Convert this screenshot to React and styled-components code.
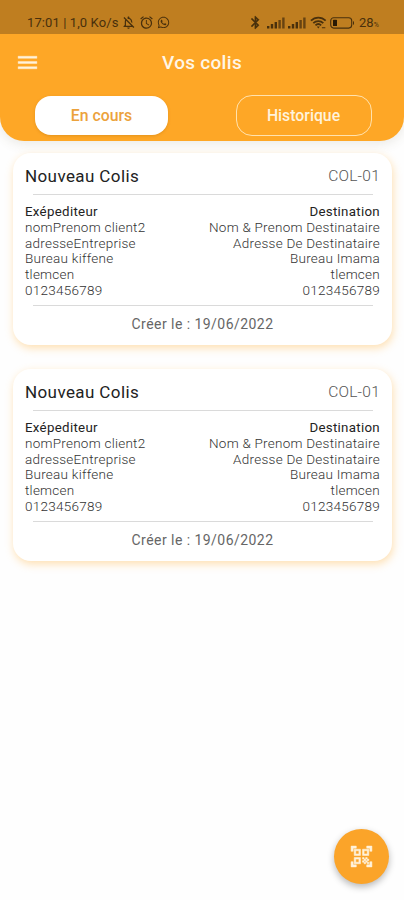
import React from 'react';
import styled, { createGlobalStyle } from 'styled-components';
import {
  MdAlarm,
  MdBluetooth,
  MdMenu,
  MdOutlineNotificationsOff,
  MdQrCodeScanner,
} from 'react-icons/md';
import { FaWhatsapp } from 'react-icons/fa';

const parcels = [
  {
    id: 1,
    title: 'Nouveau Colis',
    code: 'COL-01',
    from: ['nomPrenom client2', 'adresseEntreprise', 'Bureau kiffene', 'tlemcen', '0123456789'],
    to: ['Nom & Prenom Destinataire', 'Adresse De Destinataire', 'Bureau Imama', 'tlemcen', '0123456789'],
    date: '19/06/2022',
  },
  {
    id: 2,
    title: 'Nouveau Colis',
    code: 'COL-01',
    from: ['nomPrenom client2', 'adresseEntreprise', 'Bureau kiffene', 'tlemcen', '0123456789'],
    to: ['Nom & Prenom Destinataire', 'Adresse De Destinataire', 'Bureau Imama', 'tlemcen', '0123456789'],
    date: '19/06/2022',
  },
];

const Signal = () => (
  <svg width="18" height="12" viewBox="0 0 18 12" fill="currentColor">
    <rect x="0" y="9" width="2.4" height="2.5" />
    <rect x="3.8" y="7" width="2.4" height="4.5" />
    <rect x="7.6" y="5" width="2.4" height="6.5" />
    <rect x="11.4" y="3" width="2.4" height="8.5" opacity="0.75" />
    <rect x="15.2" y="0.5" width="2.4" height="11" opacity="0.75" />
  </svg>
);

const Wifi = () => (
  <svg width="17" height="14" viewBox="0 0 18 14" fill="none" stroke="currentColor" strokeWidth="1.9">
    <path d="M1 4.6C5.4.2 12.2.2 16.6 4.6" />
    <path d="M3.5 7.2c3-3 7.6-3 10.6 0" />
    <path d="M5.8 9.5c1.8-1.7 4.2-1.7 6 0" />
    <path d="M7.2 10.8h3.2l-1.6 2z" fill="currentColor" stroke="none" />
    <path d="M12.6 12h3.6" strokeWidth="1.2" />
  </svg>
);

const Battery = () => (
  <svg width="25" height="12" viewBox="0 0 25 12" fill="none">
    <rect x="0.7" y="0.7" width="21" height="10.4" rx="3" stroke="currentColor" strokeWidth="1.1" />
    <rect x="3" y="2.8" width="4" height="6.2" rx="0.6" fill="#2a1a04" />
    <path d="M23 4c1.4.4 1.4 3.6 0 4z" fill="currentColor" />
  </svg>
);

const App = () => {
  return (
    <Screen>
      <GlobalStyle />
      <Header>
        <StatusBar>
          <StatusGroup $gap="3px">
            <StatusText>17:01 | 1,0 Ko/s</StatusText>
            <MdOutlineNotificationsOff size={15} />
            <MdAlarm size={15} />
            <FaWhatsapp size={13} />
          </StatusGroup>
          <StatusGroup $gap="3.5px">
            <BluetoothIcon size={15} />
            <Signal />
            <Signal />
            <Wifi />
            <Battery />
            <StatusText>
              28<small>%</small>
            </StatusText>
          </StatusGroup>
        </StatusBar>
        <Toolbar>
          <MenuButton aria-label="Menu">
            <MdMenu size={25} />
          </MenuButton>
          <Title>Vos colis</Title>
        </Toolbar>
        <Tabs>
          <Tab $active>En cours</Tab>
          <Tab>Historique</Tab>
        </Tabs>
      </Header>

      <List>
        {parcels.map((parcel) => (
          <Card key={parcel.id}>
            <CardHead>
              <CardTitle>{parcel.title}</CardTitle>
              <Code>{parcel.code}</Code>
            </CardHead>
            <Divider />
            <Details>
              <Party>
                <PartyTitle>Exépediteur</PartyTitle>
                {parcel.from.map((line) => (
                  <Line key={line}>{line}</Line>
                ))}
              </Party>
              <Party $right>
                <PartyTitle>Destination</PartyTitle>
                {parcel.to.map((line) => (
                  <Line key={line}>{line}</Line>
                ))}
              </Party>
            </Details>
            <Divider />
            <Created>Créer le : {parcel.date}</Created>
          </Card>
        ))}
      </List>

      <ScanButton aria-label="Scanner">
        <MdQrCodeScanner size={25} />
      </ScanButton>
    </Screen>
  );
};

const GlobalStyle = createGlobalStyle`
  * {
    box-sizing: border-box;
  }

  body {
    margin: 0;
    background: #fefefe;
    font-family: Roboto, sans-serif;
  }

  button {
    font-family: inherit;
    padding: 0;
    border: none;
  }
`;

const Screen = styled.div`
  position: relative;
  width: 404px;
  height: 900px;
  overflow: hidden;
  background: #fefefe;
`;

const Header = styled.header`
  height: 141px;
  background: #fea726;
  border-radius: 0 0 24px 24px;
  overflow: hidden;
  box-shadow: 0 3px 12px rgba(90, 80, 50, 0.12);
`;

const StatusBar = styled.div`
  display: flex;
  justify-content: space-between;
  height: 34px;
  padding: 11px 25px 0 27px;
  background: #bf7e20;
  color: #49300c;
`;

const StatusGroup = styled.div`
  display: flex;
  align-items: center;
  gap: ${({ $gap }) => $gap};
  height: 23px;

  svg {
    flex-shrink: 0;
  }
`;

const BluetoothIcon = styled(MdBluetooth)`
  path:last-child {
    stroke: currentColor;
    stroke-width: 0.8px;
  }
`;

const StatusText = styled.span`
  font-size: 13px;
  letter-spacing: 0.1px;
  white-space: nowrap;

  small {
    font-size: 7px;
  }
`;

const Toolbar = styled.div`
  display: grid;
  grid-template-columns: 40px 1fr 40px;
  align-items: center;
  height: 57px;
  padding: 0 15px;
`;

const MenuButton = styled.button`
  display: flex;
  background: none;
  color: #fff3dc;

  path:last-child {
    stroke: currentColor;
    stroke-width: 0.4px;
  }
`;

const Title = styled.h1`
  margin: 0;
  color: #fff6e6;
  font-size: 19px;
  font-weight: 500;
  letter-spacing: 0.3px;
  text-align: center;
`;

const Tabs = styled.div`
  display: flex;
  justify-content: space-between;
  align-items: center;
  height: 49px;
  padding: 0 32px 0 35px;
`;

const Tab = styled.button`
  width: ${({ $active }) => ($active ? '133px' : '136px')};
  height: ${({ $active }) => ($active ? '39px' : '41px')};
  padding-right: ${({ $active }) => ($active ? '0' : '1px')};
  border: ${({ $active }) => ($active ? 'none' : '1.5px solid #ffe2ae')};
  border-radius: 16px;
  background: ${({ $active }) => ($active ? '#fff' : 'transparent')};
  color: ${({ $active }) => ($active ? '#eca23c' : '#fff3dc')};
  box-shadow: ${({ $active }) => ($active ? '0 1px 3px rgba(150, 90, 0, 0.25)' : 'none')};
  font-size: 15.8px;
  font-weight: 500;
`;

const List = styled.main`
  display: flex;
  flex-direction: column;
  gap: 24px;
  padding: 12px 12px 0 13px;
`;

const Card = styled.article`
  height: 192px;
  padding: 0 12px;
  background: #fff;
  border-radius: 18px;
  box-shadow: 1px 3px 9px rgba(254, 180, 70, 0.42);
`;

const CardHead = styled.div`
  display: flex;
  justify-content: space-between;
  align-items: center;
  height: 41px;
  padding-top: 5px;
`;

const CardTitle = styled.h2`
  margin: 0;
  color: #222;
  font-size: 17px;
  font-weight: 400;
  letter-spacing: 0.4px;
`;

const Code = styled.span`
  color: #555;
  font-size: 15.5px;
  font-weight: 300;
  letter-spacing: 0.25px;
`;

const Divider = styled.div`
  height: 1px;
  margin: 0 7px 0 8px;
  background: #dadada;
`;

const Details = styled.div`
  display: flex;
  justify-content: space-between;
  height: 110px;
  padding-top: 9px;
`;

const Party = styled.div`
  text-align: ${({ $right }) => ($right ? 'right' : 'left')};
`;

const PartyTitle = styled.div`
  color: #222;
  font-size: 13.3px;
  line-height: 15.8px;
  letter-spacing: 0.3px;
`;

const Line = styled.div`
  color: #333;
  font-size: 13.5px;
  font-weight: 300;
  line-height: 15.8px;
  letter-spacing: 0.25px;
`;

const Created = styled.div`
  padding-top: 9px;
  color: #666;
  font-size: 14px;
  line-height: 18px;
  letter-spacing: 0.45px;
  text-align: center;
`;

const ScanButton = styled.button`
  position: absolute;
  right: 15px;
  bottom: 16px;
  display: flex;
  align-items: center;
  justify-content: center;
  width: 55px;
  height: 55px;
  border-radius: 50%;
  background: #fba429;
  color: #fff3dc;
  box-shadow: 0 3px 7px rgba(0, 0, 0, 0.28);

  path:last-child {
    stroke: currentColor;
    stroke-width: 0.5px;
    stroke-linejoin: round;
  }
`;

export default App;
